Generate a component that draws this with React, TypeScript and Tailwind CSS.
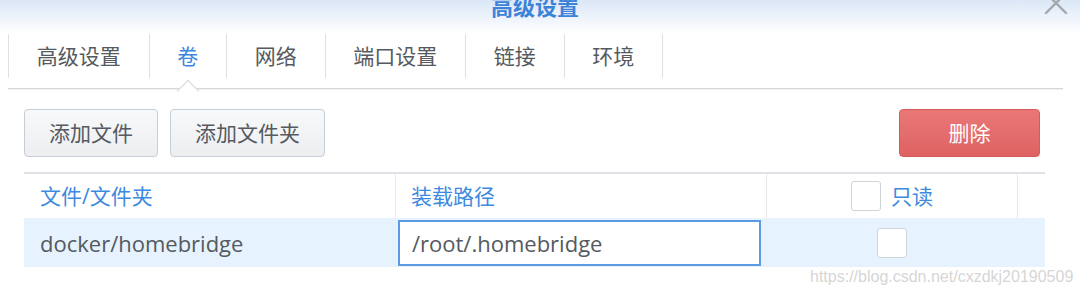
import React from "react";

const CJK = '"Open Sans", "Noto Sans CJK SC", sans-serif';

function Tab({ label, active, first }: { label: string; active?: boolean; first?: boolean }) {
  return (
    <div
      className={
        "relative h-[44px] flex items-center px-[27.75px] border-r border-[#dde1e6] text-[21px] leading-none " +
        (first ? "border-l " : "") +
        (active ? "text-[#3b87dd]" : "text-[#555a60]")
      }
    >
      {label}
      {active && (
        <div className="absolute left-1/2 top-[49px] w-[16px] h-[16px] -translate-x-1/2 rotate-45 bg-white border-l border-t border-[#d3d7dc]" />
      )}
    </div>
  );
}

function Checkbox() {
  return <div className="w-[30px] h-[30px] bg-white border border-[#cfd4da] rounded-[3px]" />;
}

export default function App() {
  return (
    <div className="w-[1080px] h-[294px] relative overflow-hidden bg-white" style={{ fontFamily: CJK }}>
      {/* title bar */}
      <div className="h-[34px] bg-gradient-to-b from-[#dbe7f7] to-white flex justify-center relative">
        <div className="-mt-[5px] mr-[10px] text-[22px] leading-[22px] font-bold text-[#3c83d8]">高级设置</div>
        <svg className="absolute left-[1044px] -top-[9px]" width="24" height="24" viewBox="0 0 24 24">
          <path d="M2 2 L22 22 M22 2 L2 22" stroke="#a3a7ab" strokeWidth="2.4" strokeLinecap="round" />
        </svg>
      </div>

      {/* tabs */}
      <div className="ml-[8px] w-[1055px] h-[55px] border-b border-[#d3d7dc] shadow-[0_1px_1px_rgba(0,0,0,0.05)] flex items-start">
        <Tab label="高级设置" first />
        <Tab label="卷" active />
        <Tab label="网络" />
        <Tab label="端口设置" />
        <Tab label="链接" />
        <Tab label="环境" />
      </div>

      {/* content */}
      <div className="pl-[24px] pt-[20px]">
        <div className="w-[1021px] h-[48px] flex items-center">
          <button className="h-[48px] px-[24px] border border-[#c7cdd4] rounded-[4px] bg-gradient-to-b from-[#f8f9fa] to-[#eceef1] text-[21px] leading-none text-[#555a60]">
            添加文件
          </button>
          <button className="ml-[12px] h-[48px] px-[24px] border border-[#c7cdd4] rounded-[4px] bg-gradient-to-b from-[#f8f9fa] to-[#eceef1] text-[21px] leading-none text-[#555a60]">
            添加文件夹
          </button>
          <div className="flex-1" />
          <button className="mr-[5px] h-[48px] w-[141px] border border-[#d65c5c] rounded-[4px] bg-gradient-to-b from-[#ea7878] to-[#de6262] text-[21px] leading-none text-white">
            删除
          </button>
        </div>

        <div className="mt-[15px] w-[1021px] border-t-2 border-[#dfe3e8]">
          <div className="grid grid-cols-[371px_371px_251px_28px] h-[44px] text-[21px] leading-none text-[#3d8ae0]">
            <div className="pl-[16px] flex items-center">文件/文件夹</div>
            <div className="border-l border-[#e6e9ec] pl-[15px] flex items-center">装载路径</div>
            <div className="border-l border-[#e6e9ec] flex items-center justify-center gap-[10px]">
              <Checkbox />
              <span>只读</span>
            </div>
            <div className="border-l border-[#e6e9ec]" />
          </div>
          <div className="grid grid-cols-[371px_371px_251px_28px] h-[49px] bg-[#e6f2fd] text-[22px] leading-none text-[#555a60]">
            <div className="pl-[16px] flex items-center">docker/homebridge</div>
            <div className="pl-[3px] pr-[5px] pt-[2px]">
              <div className="h-[46px] bg-white border-2 border-[#5b9be6] pl-[12px] flex items-center">/root/.homebridge</div>
            </div>
            <div className="flex items-center justify-center">
              <Checkbox />
            </div>
            <div />
          </div>
        </div>
      </div>

      {/* watermark */}
      <div
        className="absolute left-[810px] top-[269px] text-[16px] leading-[16px] text-[#d6d6d6] whitespace-nowrap"
        style={{ fontFamily: '"Liberation Sans", Arial, sans-serif' }}
      >
        https://blog.csdn.net/cxzdkj20190509
      </div>
    </div>
  );
}
